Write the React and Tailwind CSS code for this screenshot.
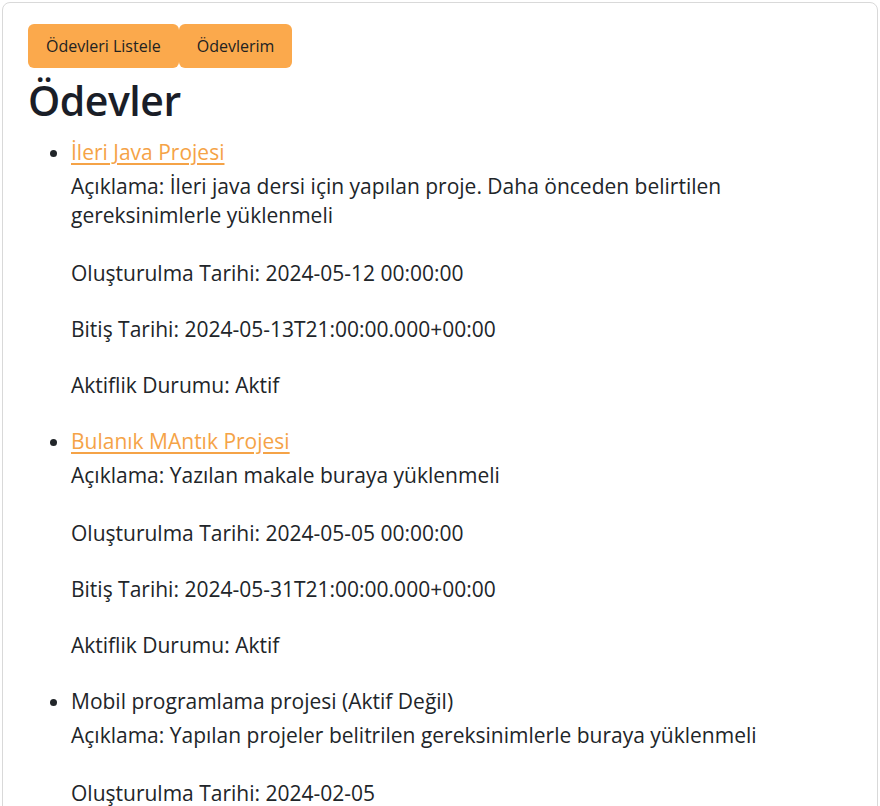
import React from 'react'

const homeworks = [
  {
    title: 'İleri Java Projesi',
    link: true,
    desc: 'İleri java dersi için yapılan proje. Daha önceden belirtilen gereksinimlerle yüklenmeli',
    created: '2024-05-12 00:00:00',
    due: '2024-05-13T21:00:00.000+00:00',
    status: 'Aktif',
  },
  {
    title: 'Bulanık MAntık Projesi',
    link: true,
    desc: 'Yazılan makale buraya yüklenmeli',
    created: '2024-05-05 00:00:00',
    due: '2024-05-31T21:00:00.000+00:00',
    status: 'Aktif',
  },
  {
    title: 'Mobil programlama projesi (Aktif Değil)',
    link: false,
    desc: 'Yapılan projeler belitrilen gereksinimlerle buraya yüklenmeli',
    created: '2024-02-05',
  },
]

function Homework({ hw }) {
  return (
    <li className="mb-[25px]">
      <div className="leading-[33px] pb-[3px]">
        {hw.link ? (
          <a href="#" className="text-[#f5a347] underline underline-offset-[3px]">{hw.title}</a>
        ) : (
          hw.title
        )}
      </div>
      <p className="leading-[29px] mb-[29px]">Açıklama: {hw.desc}</p>
      <p className="leading-[29px] mb-[27px]">Oluşturulma Tarihi: {hw.created}</p>
      {hw.due && <p className="leading-[29px] mb-[27px]">Bitiş Tarihi: {hw.due}</p>}
      {hw.status && <p className="leading-[29px]">Aktiflik Durumu: {hw.status}</p>}
    </li>
  )
}

export default function App() {
  return (
    <div className="h-[806px] overflow-hidden bg-white p-[2px]" style={{ fontFamily: '"Open Sans", "Noto Sans", sans-serif' }}>
      <div className="min-h-[900px] border border-[#d9d9d9] rounded-lg pl-[25px] pr-[20px] pt-[21px] text-[#212529]">
        <div className="flex">
          <button className="h-[44px] px-[18px] rounded-md bg-[#fba94c] text-[16px] text-[#222]">Ödevleri Listele</button>
          <button className="h-[44px] px-[18px] rounded-md bg-[#fba94c] text-[16px] text-[#222]">Ödevlerim</button>
        </div>
        <h1 className="text-[41px] leading-[60px] font-semibold tracking-[-0.5px] text-[#1a1e28] mt-[2px]">Ödevler</h1>
        <ul className="list-disc pl-[43px] mt-[6px] text-[21px]">
          {homeworks.map((hw, i) => (
            <Homework key={i} hw={hw} />
          ))}
        </ul>
      </div>
    </div>
  )
}
